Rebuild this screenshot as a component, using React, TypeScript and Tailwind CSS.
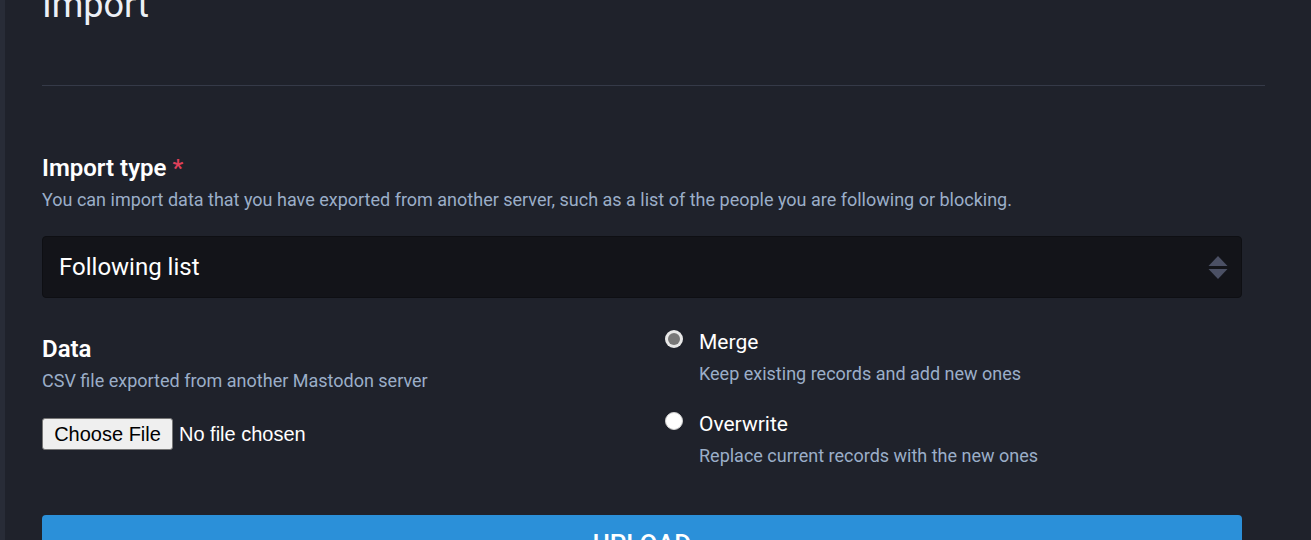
import React from "react";

function Radio({ checked }: { checked: boolean }) {
  if (checked) {
    return (
      <span className="mt-[3px] flex h-[18px] w-[18px] shrink-0 items-center justify-center rounded-full bg-[#e8e8e8]">
        <span className="h-[12px] w-[12px] rounded-full bg-[#787878]" />
      </span>
    );
  }
  return <span className="mt-[3px] block h-[18px] w-[18px] shrink-0 rounded-full border border-[#cfcfcf] bg-white" />;
}

export default function App() {
  return (
    <div
      className="flex h-[540px] w-full overflow-hidden bg-[#1f222b] text-white"
      style={{ fontFamily: "Roboto, 'Noto Sans', sans-serif" }}
    >
      <div className="w-[5px] shrink-0 bg-[#282c37]" />
      <div className="flex-1 pl-[37px] pr-[46px]">
        <h2 className="mt-[-13px] text-[36px] font-normal leading-none text-[#ecf0f6]">Import</h2>
        <hr className="mt-[62px] border-0 border-t border-[#353a48]" />

        <div className="max-w-[1200px]">
          <div className="mt-[64px] text-[24px] font-semibold leading-[36px]">
            Import type <span className="text-[#df405a]">*</span>
          </div>
          <div className="text-[18px] leading-[27px] text-[#9baec8]">
            You can import data that you have exported from another server, such as a list of the people you are following or blocking.
          </div>

          <div className="mt-[23px] flex h-[62px] items-center justify-between rounded-[4px] border border-[#0e0f13] bg-[#131419] pl-[16px] pr-[13px]">
            <span className="text-[24px]">Following list</span>
            <svg width="20" height="24" viewBox="0 0 20 24" className="mt-[1px]">
              <polygon points="10,0 19.5,10 0.5,10" fill="#4b5064" />
              <polygon points="0.5,13 19.5,13 10,23" fill="#4b5064" />
            </svg>
          </div>

          <div className="mt-[33px] grid grid-cols-[577px_1fr] gap-x-[46px]">
            <div>
              <div className="text-[24px] font-semibold leading-[36px]">Data</div>
              <div className="text-[18px] leading-[27px] text-[#9baec8]">
                CSV file exported from another Mastodon server
              </div>
              <div className="mt-[24px] flex items-center" style={{ fontFamily: "'Liberation Sans', Arial, sans-serif" }}>
                <span className="flex h-[32px] w-[131px] items-center justify-center rounded-[3px] border border-[#767676] bg-[#efefef] text-[20px] text-black">
                  Choose File
                </span>
                <span className="ml-[6px] text-[20px] text-white">No file chosen</span>
              </div>
            </div>
            <div className="mt-[-4px] flex flex-col">
              <div className="flex gap-[16px]">
                <Radio checked />
                <div>
                  <div className="text-[21px] font-normal leading-[30px]">Merge</div>
                  <div className="mt-[3px] text-[18px] leading-[27px] text-[#9baec8]">Keep existing records and add new ones</div>
                </div>
              </div>
              <div className="mt-[22px] flex gap-[16px]">
                <Radio checked={false} />
                <div>
                  <div className="text-[21px] font-normal leading-[30px]">Overwrite</div>
                  <div className="mt-[3px] text-[18px] leading-[27px] text-[#9baec8]">Replace current records with the new ones</div>
                </div>
              </div>
            </div>
          </div>

          <button className="mt-[46px] flex h-[56px] w-full items-start justify-center rounded-[4px] bg-[#2b90d9] pt-[10px] text-[26px] font-medium uppercase leading-normal text-white">
            Upload
          </button>
        </div>
      </div>
    </div>
  );
}
